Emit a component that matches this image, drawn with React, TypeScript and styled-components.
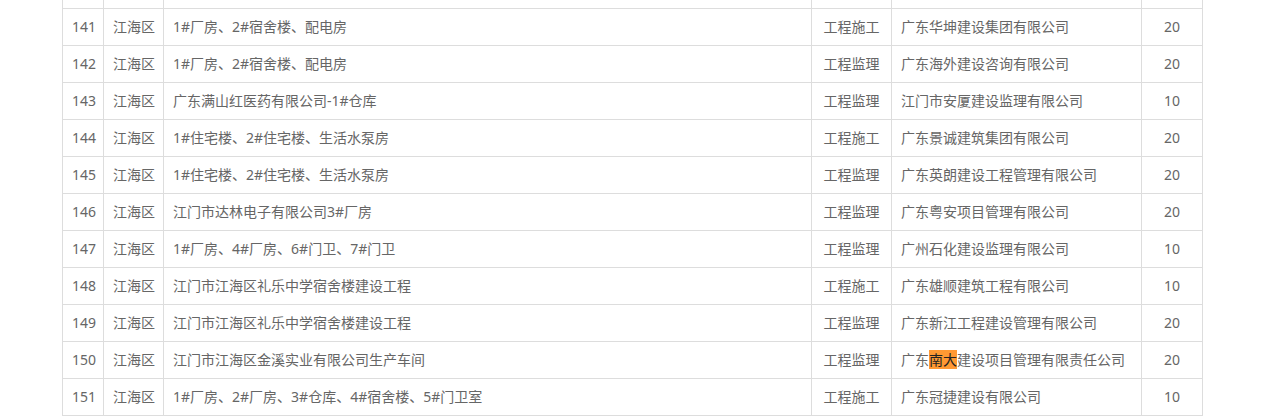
import styled, { createGlobalStyle } from "styled-components";

const GlobalStyle = createGlobalStyle`
  html, body {
    margin: 0;
    padding: 0;
    background: #fff;
    overflow: hidden;
  }
  body {
    font-family: "Noto Sans", "Noto Sans CJK SC", sans-serif;
  }
`;

const Page = styled.div`
  width: 1276px;
  height: 416px;
  overflow: hidden;
  padding-left: 62px;
  box-sizing: border-box;
`;

const Table = styled.table`
  border-collapse: collapse;
  table-layout: fixed;
  width: 1140px;
  margin-top: -29px;
  font-size: 14px;
  color: #666;
`;

const Row = styled.tr`
  height: 37px;
`;

const Cell = styled.td<{ $align?: "left" | "center" }>`
  border: 1px solid #dddddd;
  padding: 0 9px;
  text-align: ${(p) => p.$align ?? "center"};
  white-space: nowrap;
  overflow: hidden;
  line-height: 20px;
`;

const Mark = styled.span`
  background: #ff9933;
  color: #222;
`;

type Item = {
  no: number;
  area: string;
  name: string;
  kind: string;
  company: React.ReactNode;
  score: number;
};

const rows: Item[] = [
  { no: 141, area: "江海区", name: "1#厂房、2#宿舍楼、配电房", kind: "工程施工", company: "广东华坤建设集团有限公司", score: 20 },
  { no: 142, area: "江海区", name: "1#厂房、2#宿舍楼、配电房", kind: "工程监理", company: "广东海外建设咨询有限公司", score: 20 },
  { no: 143, area: "江海区", name: "广东满山红医药有限公司-1#仓库", kind: "工程监理", company: "江门市安厦建设监理有限公司", score: 10 },
  { no: 144, area: "江海区", name: "1#住宅楼、2#住宅楼、生活水泵房", kind: "工程施工", company: "广东景诚建筑集团有限公司", score: 20 },
  { no: 145, area: "江海区", name: "1#住宅楼、2#住宅楼、生活水泵房", kind: "工程监理", company: "广东英朗建设工程管理有限公司", score: 20 },
  { no: 146, area: "江海区", name: "江门市达林电子有限公司3#厂房", kind: "工程监理", company: "广东粤安项目管理有限公司", score: 20 },
  { no: 147, area: "江海区", name: "1#厂房、4#厂房、6#门卫、7#门卫", kind: "工程监理", company: "广州石化建设监理有限公司", score: 10 },
  { no: 148, area: "江海区", name: "江门市江海区礼乐中学宿舍楼建设工程", kind: "工程施工", company: "广东雄顺建筑工程有限公司", score: 10 },
  { no: 149, area: "江海区", name: "江门市江海区礼乐中学宿舍楼建设工程", kind: "工程监理", company: "广东新江工程建设管理有限公司", score: 20 },
  {
    no: 150,
    area: "江海区",
    name: "江门市江海区金溪实业有限公司生产车间",
    kind: "工程监理",
    company: (
      <>
        广东<Mark>南大</Mark>建设项目管理有限责任公司
      </>
    ),
    score: 20,
  },
  { no: 151, area: "江海区", name: "1#厂房、2#厂房、3#仓库、4#宿舍楼、5#门卫室", kind: "工程施工", company: "广东冠捷建设有限公司", score: 10 },
];

export default function App() {
  return (
    <Page>
      <GlobalStyle />
      <Table>
        <colgroup>
          <col style={{ width: 41 }} />
          <col style={{ width: 60 }} />
          <col style={{ width: 648 }} />
          <col style={{ width: 80 }} />
          <col style={{ width: 250 }} />
          <col style={{ width: 61 }} />
        </colgroup>
        <tbody>
          <Row>
            <Cell />
            <Cell />
            <Cell />
            <Cell />
            <Cell />
            <Cell />
          </Row>
          {rows.map((r) => (
            <Row key={r.no}>
              <Cell>{r.no}</Cell>
              <Cell>{r.area}</Cell>
              <Cell $align="left">{r.name}</Cell>
              <Cell>{r.kind}</Cell>
              <Cell $align="left">{r.company}</Cell>
              <Cell>{r.score}</Cell>
            </Row>
          ))}
        </tbody>
      </Table>
    </Page>
  );
}
